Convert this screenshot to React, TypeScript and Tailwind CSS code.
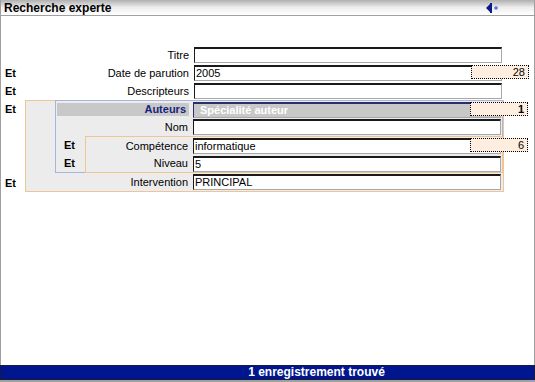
import React from "react";

const font = { fontFamily: '"Liberation Sans", Arial, sans-serif' };

const Counter: React.FC<{ n: string }> = ({ n }) => (
    <div className="absolute left-[276px] top-[-2px] w-[58px] h-[14px] border border-dotted border-black bg-[#fdeee0] text-right pr-[3px] text-[11px] leading-[12px] text-black">
        {n}
    </div>
);

const Field: React.FC<{ value?: string; counter?: string }> = ({ value, counter }) => (
    <div className="relative w-[308px] h-[16px] shrink-0 bg-white border-t-2 border-l border-t-[#1a1a1a] border-l-[#1a1a1a] border-b border-r border-b-[#a8a8a8] border-r-[#a8a8a8] pl-[1px] text-[11px] leading-[12px] text-black">
        {value}
        {counter && <Counter n={counter} />}
    </div>
);

const Row: React.FC<{ label: string; value?: string; counter?: string; h?: string; pr?: string }> = ({
    label,
    value,
    counter,
    h = "h-[18px]",
    pr = "pr-[1px]",
}) => (
    <div className={`flex items-center ${h} ${pr}`}>
        <div className="flex-1 text-right pr-[5px] text-[11px] leading-[13px] text-black whitespace-nowrap">{label}</div>
        <Field value={value} counter={counter} />
    </div>
);

const Et: React.FC<{ className?: string }> = ({ className = "" }) => (
    <div className={`h-[18px] flex items-center text-[11px] font-bold text-black ${className}`}>Et</div>
);

export default function App() {
    const topRows = [
        { et: false, label: "Titre", value: "" },
        { et: true, label: "Date de parution", value: "2005", counter: "28" },
        { et: true, label: "Descripteurs", value: "" },
    ];

    return (
        <div style={font} className="w-[535px] h-[382px] flex flex-col bg-white overflow-hidden">
            {/* TITLE BAR */}
            <div className="h-[16px] shrink-0 flex items-center justify-between px-[3px] border-x border-b border-[#a0a0a0] bg-linear-to-b from-[#b0b0b0] via-[#eeeeee] to-white">
                <span className="text-[12px] font-bold text-black leading-[14px]">Recherche experte</span>
                <svg width="12" height="10" viewBox="0 0 12 10" className="mr-[33px]">
                    <path d="M0 5 L4 1 L4 0 L6 0 L6 10 L4 10 L4 9 Z" fill="#0c1a86" />
                    <circle cx="10" cy="5" r="1.8" fill="#5672e4" />
                </svg>
            </div>

            {/* FORM */}
            <div className="flex-1 border-x border-[#a0a0a0] pt-[30px]">
                {topRows.map((r) => (
                    <div key={r.label} className="flex items-center h-[18px] pr-[32px]">
                        <div className="w-[24px] pl-[4px]">{r.et && <Et />}</div>
                        <div className="flex-1 text-right pr-[5px] text-[11px] leading-[13px] text-black">{r.label}</div>
                        <Field value={r.value} counter={r.counter} />
                    </div>
                ))}

                {/* GROUP */}
                <div className="flex">
                    <div className="w-[24px] pl-[4px] flex flex-col justify-between">
                        <Et />
                        <Et />
                    </div>
                    <div className="w-[479px] border border-[#efc594] bg-[#ececec]">
                        {/* AUTEURS */}
                        <div className="ml-[29px] -mt-px border border-[#a9b3e0]">
                            <div className="flex items-center h-[17px] pr-[1px]">
                                <div className="flex-1 ml-[1px] h-[13px] bg-[#c8c8c8] text-right pr-[3px] mr-[4px] text-[11px] leading-[13px] font-bold text-[#15237e]">
                                    Auteurs
                                </div>
                                <div className="relative w-[308px] h-[16px] bg-[#c8c8c8] border-t-2 border-l border-t-[#2a2f6a] border-l-[#2a2f6a] border-b border-r border-b-[#a8a8a8] border-r-[#a8a8a8] pl-[6px] text-[11px] leading-[13px] font-bold text-white">
                                    Spécialité auteur
                                    <Counter n="1" />
                                </div>
                            </div>
                            <Row label="Nom" />
                            <div className="flex">
                                <div className="w-[29px] pl-[8px]">
                                    <Et />
                                    <Et />
                                </div>
                                <div className="flex-1 -mr-px -mb-px border border-[#efc594]">
                                    <Row label="Compétence" value="informatique" counter="6" />
                                    <Row label="Niveau" value="5" h="h-[17px]" />
                                </div>
                            </div>
                        </div>
                        <Row label="Intervention" value="PRINCIPAL" pr="pr-[2px]" />
                    </div>
                </div>
            </div>

            {/* STATUS BAR */}
            <div className="h-[15px] shrink-0 bg-[#00168f] border border-[#1a1a40] flex items-center justify-center pl-[98px] text-[12px] font-bold text-white leading-[13px]">
                1 enregistrement trouvé
            </div>
            <div className="h-[2px] shrink-0 bg-[#a0a0a0]" />
        </div>
    );
}
